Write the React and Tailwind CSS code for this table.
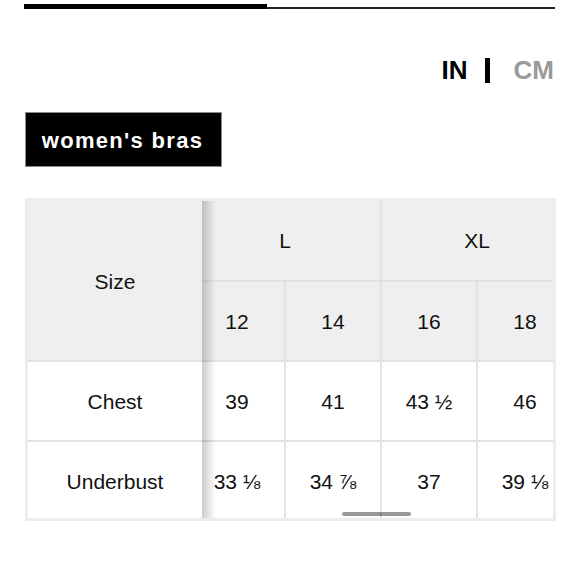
import React from 'react';

const cols = [
  { size: '12', chest: '39', under: '33 ⅛' },
  { size: '14', chest: '41', under: '34 ⅞' },
  { size: '16', chest: '43 ½', under: '37' },
  { size: '18', chest: '46', under: '39 ⅛' },
];

const App = () => {
  return (
    <div className="w-[580px] h-[580px] bg-white text-[#111] font-['Liberation_Sans',Arial,sans-serif]">
      {/* progress line */}
      <div className="flex items-end pt-[4px] pl-[24px] pr-[25px]">
        <div className="w-[243px] h-[5px] bg-black" />
        <div className="flex-1 h-[2px] bg-[#222]" />
      </div>

      {/* unit toggle */}
      <div className="flex justify-end items-center pr-[26px] mt-[49px] h-[25px] text-[26px] leading-[25px] font-bold">
        <span className="text-black">IN</span>
        <span className="ml-[17px] mr-[24px] w-[5px] h-[25px] bg-black" />
        <span className="text-[#9a9a9a]">CM</span>
      </div>

      {/* category tag */}
      <div className="ml-[25px] mt-[29px] w-[197px] h-[55px] flex items-center justify-center bg-black border border-[#8a8a8a]">
        <span className="text-white text-[22px] font-bold tracking-[1.3px] pt-[1px] pr-[2px]">women's bras</span>
      </div>

      {/* size table */}
      <div className="ml-[25px] mt-[31px] w-[531px] border-[3px] border-[#ececec] flex text-[21px]">
        <div className="w-[174px] shrink-0 flex flex-col">
          <div className="h-[161px] flex items-center justify-center bg-[#efefef] border-b-2 border-[#e2e2e2] pt-[2px]">Size</div>
          <div className="h-[80px] flex items-center justify-center border-b-2 border-[#e2e2e2] pt-[2px]">Chest</div>
          <div className="h-[76px] flex items-center justify-center pt-[4px]">Underbust</div>
        </div>

        <div className="flex-1 overflow-hidden relative">
          <div className="-ml-[12px] w-[384px] flex flex-col">
            <div className="flex h-[81px] bg-[#efefef] border-b-2 border-[#e2e2e2]">
              <div className="w-[192px] flex items-center justify-center border-r-2 border-[#e2e2e2]">L</div>
              <div className="w-[192px] flex items-center justify-center border-r-2 border-[#e2e2e2]">XL</div>
            </div>
            <div className="flex h-[80px] bg-[#efefef] border-b-2 border-[#e2e2e2]">
              {cols.map((c) => (
                <div key={c.size} className="w-[96px] flex items-center justify-center border-r-2 border-[#e2e2e2] pt-[2px]">{c.size}</div>
              ))}
            </div>
            <div className="flex h-[80px] border-b-2 border-[#e2e2e2]">
              {cols.map((c) => (
                <div key={c.size} className="w-[96px] flex items-center justify-center border-r-2 border-[#e2e2e2] pt-[2px]">{c.chest}</div>
              ))}
            </div>
            <div className="flex h-[76px]">
              {cols.map((c) => (
                <div key={c.size} className="w-[96px] flex items-center justify-center border-r-2 border-[#e2e2e2] pt-[4px]">{c.under}</div>
              ))}
            </div>
          </div>

          {/* sticky column shadow */}
          <div className="absolute left-0 top-0 bottom-0 w-[14px] bg-linear-to-r from-black/20 to-transparent pointer-events-none" />
          {/* scroll indicator */}
          <div className="absolute left-[140px] bottom-[2px] w-[69px] h-[4px] rounded-full bg-black/40" />
        </div>
      </div>
    </div>
  );
};

export default App;
